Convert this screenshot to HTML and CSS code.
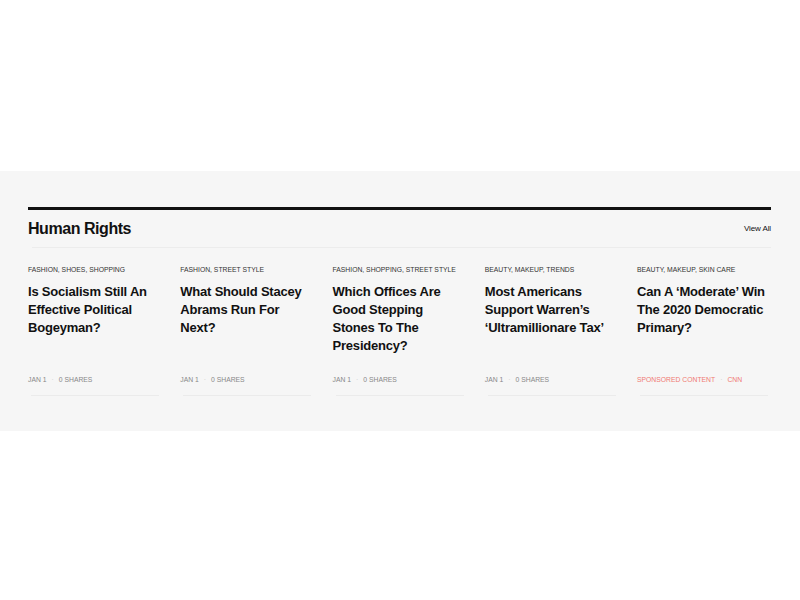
FILE: index.html
```html
<!DOCTYPE html>
<html>
<head>
<meta charset="utf-8">
<link rel="stylesheet" href="styles.css">
</head>
<body>
<section class="band">
  <div class="wrap">
    <div class="head">
      <h2 class="title">Human Rights</h2>
      <a class="view">View All</a>
    </div>
    <div class="grid">
      <article class="card">
        <div class="cats">Fashion, Shoes, Shopping</div>
        <h3 class="h">Is Socialism Still An Effective Political Bogeyman?</h3>
        <div class="meta"><span>Jan 1</span><span class="dot">·</span><span>0 Shares</span></div>
      </article>
      <article class="card">
        <div class="cats">Fashion, Street Style</div>
        <h3 class="h">What Should Stacey Abrams Run For Next?</h3>
        <div class="meta"><span>Jan 1</span><span class="dot">·</span><span>0 Shares</span></div>
      </article>
      <article class="card">
        <div class="cats">Fashion, Shopping, Street Style</div>
        <h3 class="h">Which Offices Are Good Stepping Stones To The Presidency?</h3>
        <div class="meta"><span>Jan 1</span><span class="dot">·</span><span>0 Shares</span></div>
      </article>
      <article class="card">
        <div class="cats">Beauty, Makeup, Trends</div>
        <h3 class="h">Most Americans Support Warren’s ‘Ultramillionare Tax’</h3>
        <div class="meta"><span>Jan 1</span><span class="dot">·</span><span>0 Shares</span></div>
      </article>
      <article class="card">
        <div class="cats">Beauty, Makeup, Skin Care</div>
        <h3 class="h">Can A ‘Moderate’ Win The 2020 Democratic Primary?</h3>
        <div class="meta sponsored"><span>Sponsored Content</span><span class="dot">·</span><span>CNN</span></div>
      </article>
    </div>
  </div>
</section>
</body>
</html>
```
FILE: styles.css
```css
html, body {
  margin: 0;
  padding: 0;
  background: #fff;
  font-family: "Liberation Sans", Arial, sans-serif;
}
.band {
  margin-top: 171px;
  background: #f6f6f6;
  padding: 36px 29px 36px 28px;
  height: 260px;
  box-sizing: border-box;
}
.wrap {
  border-top: 3px solid #111;
}
.head {
  display: flex;
  justify-content: space-between;
  align-items: center;
  height: 37px;
  border-bottom: 1px solid #ececec;
  margin-left: 4px;
}
.title {
  margin: 0 0 0 -4px;
  font-size: 16px;
  font-weight: bold;
  color: #111;
  letter-spacing: -0.45px;
}
.view {
  font-size: 8px;
  color: #111;
  letter-spacing: -0.1px;
}
.grid {
  display: grid;
  grid-template-columns: repeat(5, 134px);
  column-gap: 18.25px;
  padding-top: 17px;
}
.card {
  display: flex;
  flex-direction: column;
  height: 131px;
  position: relative;
}
.card::after {
  content: "";
  position: absolute;
  left: 3px;
  right: 3px;
  bottom: 0;
  border-bottom: 1px solid #ebebeb;
}
.cats {
  font-size: 6.8px;
  text-transform: uppercase;
  color: #333;
  line-height: 9px;
}
.h {
  margin: 9px 0 0;
  font-size: 13px;
  line-height: 18px;
  font-weight: bold;
  color: #111;
  letter-spacing: -0.2px;
}
.meta {
  margin-top: auto;
  margin-bottom: 13px;
  font-size: 6.8px;
  text-transform: uppercase;
  color: #888;
  display: flex;
  gap: 5px;
}
.dot {
  color: #ccc;
}
.sponsored {
  color: #f07a74;
}
```
